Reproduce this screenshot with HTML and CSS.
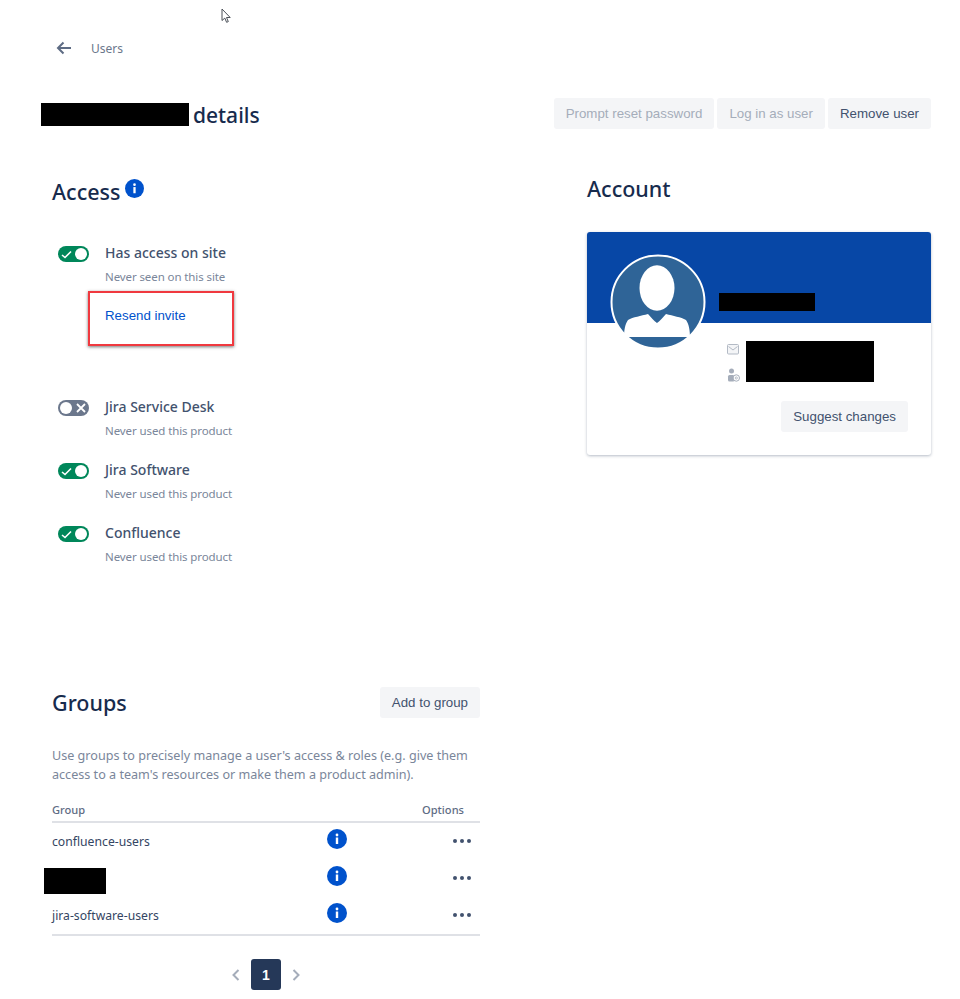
FILE: index.html
```html
<!DOCTYPE html>
<html lang="en">
<head>
<meta charset="utf-8">
<title>User details</title>
<link rel="stylesheet" href="styles.css">
</head>
<body>
<svg class="cursor" width="12" height="16" viewBox="0 0 12 16"><path d="M1 1v11.500l2.800-2.400 1.800 4.200 1.700-.7-1.800-4.100h3.700z" fill="#fff" stroke="#4a4f57" stroke-width="1"/></svg>
<div class="page">
  <nav class="crumb">
    <svg width="16" height="14" viewBox="0 0 16 14"><path d="M15 7H2M7.500 1.500 2 7l5.500 5.500" fill="none" stroke="#5e6c84" stroke-width="2"/></svg>
    <span>Users</span>
  </nav>
  <header class="title-row">
    <h1 class="title"><span class="redact redact-title"></span>details</h1>
    <div class="actions">
      <button class="btn btn-off">Prompt reset password</button>
      <button class="btn btn-off">Log in as user</button>
      <button class="btn">Remove user</button>
    </div>
  </header>
  <main class="columns">
    <section class="access">
      <h2 class="heading">Access <svg class="info info-head" viewBox="0 0 20 20"><circle cx="10" cy="10" r="10" fill="#0052cc"/><rect x="8.800" y="8.500" width="2.400" height="6.500" fill="#fff"/><circle cx="10" cy="6" r="1.400" fill="#fff"/></svg></h2>
      <div class="product first">
        <span class="toggle on"><svg width="11" height="9" viewBox="0 0 11 9"><path d="M1 5l3 2.500L10 1.500" fill="none" stroke="#fff" stroke-width="1.600"/></svg><i></i></span>
        <div class="product-text">
          <div class="product-name">Has access on site</div>
          <div class="product-sub">Never seen on this site</div>
        </div>
      </div>
      <div class="resend-box"><a class="resend">Resend invite</a></div>
      <div class="product gap-large">
        <span class="toggle off"><i></i><svg width="10" height="10" viewBox="0 0 10 10"><path d="M1 1l8 8M9 1l-8 8" fill="none" stroke="#fff" stroke-width="1.800"/></svg></span>
        <div class="product-text">
          <div class="product-name">Jira Service Desk</div>
          <div class="product-sub">Never used this product</div>
        </div>
      </div>
      <div class="product">
        <span class="toggle on"><svg width="11" height="9" viewBox="0 0 11 9"><path d="M1 5l3 2.500L10 1.500" fill="none" stroke="#fff" stroke-width="1.600"/></svg><i></i></span>
        <div class="product-text">
          <div class="product-name">Jira Software</div>
          <div class="product-sub">Never used this product</div>
        </div>
      </div>
      <div class="product">
        <span class="toggle on"><svg width="11" height="9" viewBox="0 0 11 9"><path d="M1 5l3 2.500L10 1.500" fill="none" stroke="#fff" stroke-width="1.600"/></svg><i></i></span>
        <div class="product-text">
          <div class="product-name">Confluence</div>
          <div class="product-sub">Never used this product</div>
        </div>
      </div>
    </section>
    <section class="account">
      <h2 class="heading heading-account">Account</h2>
      <div class="card">
        <div class="banner">
          <span class="redact redact-name"></span>
        </div>
        <svg class="avatar" viewBox="0 0 96 96">
          <defs><clipPath id="av"><circle cx="48" cy="48" r="46.500"/></clipPath></defs>
          <circle cx="48" cy="48" r="46.500" fill="#2f6497" stroke="#fff" stroke-width="2"/>
          <g clip-path="url(#av)">
            <ellipse cx="47" cy="34" rx="17.500" ry="22.800" fill="#fff"/>
            <path d="M14 83c0-6 1-13 4-17 5-3 13-4 20-6 3 3 6 7 9 9 3-2 6-6 9-9 7 2 15 3 20 6 3 4 4 11 4 17z" fill="#fff"/>
          </g>
        </svg>
        <div class="contact">
          <div class="contact-icons">
            <svg width="12" height="11" viewBox="0 0 12 11"><rect x=".5" y=".5" width="11" height="9.500" rx="1" fill="#f4f5f7" stroke="#b3bac5"/><path d="M1.500 2.500 6 6l4.500-3.500" fill="none" stroke="#b3bac5"/></svg>
            <svg width="13" height="14" viewBox="0 0 13 14"><circle cx="4.500" cy="3" r="2.500" fill="#a5adba"/><rect x="1" y="7" width="6.500" height="6.500" rx="1.500" fill="#a5adba"/><circle cx="9.300" cy="10" r="3.200" fill="#fff" stroke="#a5adba"/><circle cx="9.300" cy="10" r="1.100" fill="none" stroke="#a5adba" stroke-width=".8"/></svg>
          </div>
          <span class="redact redact-contact"></span>
        </div>
        <div class="card-foot"><button class="btn">Suggest changes</button></div>
      </div>
    </section>
  </main>
  <section class="groups">
    <div class="groups-head">
      <h2 class="heading">Groups</h2>
      <button class="btn">Add to group</button>
    </div>
    <p class="groups-desc">Use groups to precisely manage a user's access &amp; roles (e.g. give them access to a team's resources or make them a product admin).</p>
    <div class="group-table">
      <div class="group-header"><span>Group</span><span>Options</span></div>
      <div class="group-row">
        <span class="group-name">confluence-users</span>
        <svg class="info" viewBox="0 0 20 20"><circle cx="10" cy="10" r="10" fill="#0052cc"/><rect x="8.800" y="8.500" width="2.400" height="6.500" fill="#fff"/><circle cx="10" cy="6" r="1.400" fill="#fff"/></svg>
        <span class="dots"><i></i><i></i><i></i></span>
      </div>
      <div class="group-row">
        <span class="group-name"><span class="redact redact-group"></span></span>
        <svg class="info" viewBox="0 0 20 20"><circle cx="10" cy="10" r="10" fill="#0052cc"/><rect x="8.800" y="8.500" width="2.400" height="6.500" fill="#fff"/><circle cx="10" cy="6" r="1.400" fill="#fff"/></svg>
        <span class="dots"><i></i><i></i><i></i></span>
      </div>
      <div class="group-row">
        <span class="group-name">jira-software-users</span>
        <svg class="info" viewBox="0 0 20 20"><circle cx="10" cy="10" r="10" fill="#0052cc"/><rect x="8.800" y="8.500" width="2.400" height="6.500" fill="#fff"/><circle cx="10" cy="6" r="1.400" fill="#fff"/></svg>
        <span class="dots"><i></i><i></i><i></i></span>
      </div>
    </div>
    <div class="pager">
      <svg width="8" height="12" viewBox="0 0 8 12"><path d="M6.500 1 1.500 6l5 5" fill="none" stroke="#a5adba" stroke-width="2"/></svg>
      <span class="page-current">1</span>
      <svg width="8" height="12" viewBox="0 0 8 12"><path d="M1.500 1l5 5-5 5" fill="none" stroke="#a5adba" stroke-width="2"/></svg>
    </div>
  </section>
</div>
</body>
</html>
```
FILE: styles.css
```css
* { box-sizing: border-box; }
html, body { margin: 0; padding: 0; background: #fff; }
body { width: 960px; height: 999px; overflow: hidden; position: relative; font-family: "Noto Sans", "Open Sans", sans-serif; color: #172b4d; }
.cursor { position: absolute; left: 221px; top: 8px; }
.page { width: 960px; }

.crumb { display: flex; align-items: center; gap: 19px; height: 20px; margin: 38px 0 0 56px; font-size: 12px; color: #6b778c; }

.title-row { display: flex; justify-content: space-between; align-items: center; height: 31px; margin: 40px 29px 0 41px; }
.title { display: flex; align-items: center; gap: 4px; margin: 2px 0 0; font-size: 21px; font-weight: 500; color: #172b4d; line-height: 28px; }
.actions { display: flex; gap: 3px; }

.btn { height: 31px; padding: 0 12px; border: 0; border-radius: 3px; background: #f4f5f7; color: #42526e; font-family: "Liberation Sans", Arial, sans-serif; font-size: 13.3px; white-space: nowrap; }
.btn-off { color: #a5adba; }

.redact { display: block; background: #000; }
.redact-title { width: 148px; height: 23px; }
.redact-name { width: 96px; height: 18px; }
.redact-contact { width: 128px; height: 41px; }
.redact-group { width: 62px; height: 26px; margin: 4px 0 0 -8px; }

.columns { display: grid; grid-template-columns: 428px 344px; column-gap: 107px; margin: 48px 0 0 52px; }
.heading { margin: 0; font-size: 21.5px; line-height: 30px; font-weight: 500; color: #172b4d; }
.heading-account { margin-top: -3px; }
.info { width: 20px; height: 20px; display: block; }
.info-head { display: inline-block; width: 19px; height: 19px; margin-left: -1px; vertical-align: 2px; }

.product { display: flex; align-items: flex-start; height: 63px; margin-left: 6px; }
.product.first { margin-top: 39px; height: 45px; }
.product.gap-large { margin-top: 54px; }
.product-text { margin-left: 16px; }
.product-name { font-size: 14px; line-height: 20px; font-weight: 500; color: #42526e; margin-top: -3px; }
.product-sub { font-size: 11.5px; letter-spacing: -.1px; line-height: 16px; color: #7a869a; margin-top: 6px; }

.toggle { display: flex; align-items: center; justify-content: space-between; width: 31px; height: 16px; padding: 0 2px 0 3px; border-radius: 8px; }
.toggle.on { background: #00875a; }
.toggle.off { background: #6b778c; padding: 0 3px 0 2px; }
.toggle i { width: 12px; height: 12px; border-radius: 50%; background: #fff; }

.resend-box { width: 146px; height: 55px; margin: 0 0 0 36px; padding: 10px 0 0 15px; border: 2px solid #f0393f; box-shadow: 0 1px 3px rgba(60, 60, 60, .7); }
.resend { font-family: "Liberation Sans", Arial, sans-serif; font-size: 13.3px; line-height: 18px; color: #0052cc; }

.card { position: relative; height: 223px; margin-top: 28px; border-radius: 3px; background: #fff; box-shadow: 0 1px 3px rgba(9, 30, 66, .3); overflow: hidden; }
.banner { height: 91px; padding: 61px 0 0 132px; background: #0747a6; }
.avatar { position: absolute; left: 23px; top: 22px; width: 96px; height: 96px; }
.contact { display: flex; gap: 6px; margin: 18px 0 0 140px; }
.contact-icons { display: flex; flex-direction: column; gap: 13px; padding-top: 3px; }
.contact-icons svg { display: block; }
.card-foot { display: flex; justify-content: flex-end; padding: 19px 23px 0 0; }

.groups { width: 428px; margin: 98px 0 0 52px; }
.groups-head { display: flex; justify-content: space-between; align-items: center; height: 31px; }
.groups-desc { margin: 28px 0 0; font-size: 12.6px; line-height: 19px; color: #7a869a; }
.group-table { margin-top: 18px; border-bottom: 2px solid #dfe1e6; }
.group-header { display: flex; justify-content: space-between; height: 21px; padding-right: 16px; border-bottom: 2px solid #dfe1e6; font-size: 11.1px; line-height: 16px; font-weight: 500; color: #5e6c84; }
.group-row { display: flex; align-items: center; height: 37px; }
.group-row .info { margin-bottom: 5px; }
.group-name { width: 275px; font-size: 12.2px; color: #344563; }
.dots { display: flex; gap: 3px; margin-left: 106px; margin-bottom: 1px; }
.dots i { width: 4px; height: 4px; border-radius: 50%; background: #42526e; }
.pager { display: flex; align-items: center; justify-content: center; gap: 11px; margin: 23px 0 0 0; padding-right: 0; }
.page-current { display: flex; align-items: center; justify-content: center; width: 30px; height: 31px; border-radius: 3px; background: #253858; color: #fff; font-family: "Liberation Sans", Arial, sans-serif; font-size: 14px; font-weight: 700; }
```
